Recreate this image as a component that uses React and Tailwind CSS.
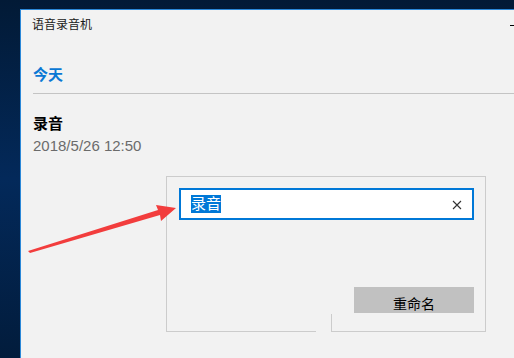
import React from "react";

const font = { fontFamily: '"Liberation Sans", "Noto Sans CJK SC", sans-serif' };

export default function App() {
  return (
    <div
      className="relative flex w-[514px] h-[358px] overflow-hidden bg-gradient-to-b from-[#021a36] via-[#03295a] to-[#021c3c] pl-[20px] pt-[9px]"
      style={font}
    >
      {/* window */}
      <div className="relative flex-1 border-l border-t border-[#2b88d8] bg-[#f2f2f2]">
        {/* title bar */}
        <div className="flex h-[31px] items-center justify-between pl-[11px]">
          <span className="text-[12px] leading-[31px] text-[#1a1a1a]">语音录音机</span>
          <span className="mb-[1px] h-[1px] w-[4px] bg-black" />
        </div>

        <div className="pl-[12px]">
          <div className="mt-[24px] text-[15px] font-bold leading-[20px] text-[#0a78d4]">今天</div>
          <div className="mt-[8px] h-[1px] bg-[#c4c4c4]" />

          <div className="mt-[20px] text-[15px] font-bold leading-[20px] text-black">录音</div>
          <div className="mt-[2px] text-[15px] leading-[20px] text-[#6b6b6b]">2018/5/26 12:50</div>
        </div>

        {/* rename dialog */}
        <div className="relative ml-[145px] mt-[20px] h-[156px] w-[320px] border border-[#cccccc] bg-[#f2f2f2] pl-[12px] pr-[11px] pt-[11px]">
          <div className="flex h-[32px] items-center justify-between border-2 border-[#0078d7] bg-white pl-[10px] pr-[10px]">
            <span className="bg-[#0078d7] text-[15px] leading-[18px] text-white">录音</span>
            <svg width="10" height="10" viewBox="0 0 10 10" className="mt-[1px]">
              <path d="M1 1 L9 9 M9 1 L1 9" stroke="#333" strokeWidth="1.1" fill="none" />
            </svg>
          </div>
          <div className="mt-[67px] flex justify-end">
            <div className="flex h-[26px] w-[120px] justify-center bg-[#c1c1c1] pt-[8px] text-[14px] leading-[18px] text-black">
              重命名
            </div>
          </div>
          {/* watermark smudge */}
          <div className="absolute bottom-[-1px] left-[149px] h-[19px] w-[15px] bg-[#f2f2f2]" />
          <div className="absolute bottom-[-1px] left-[164px] h-[18px] w-[1px] bg-[#cccccc]" />
        </div>
      </div>

      {/* red arrow annotation */}
      <svg className="absolute left-0 top-0" width="514" height="358" viewBox="0 0 514 358">
        <polygon
          points="28,251 158,210 156,205 176,208 161,221 160,215 30,253"
          fill="#f23d3d"
        />
      </svg>
    </div>
  );
}
